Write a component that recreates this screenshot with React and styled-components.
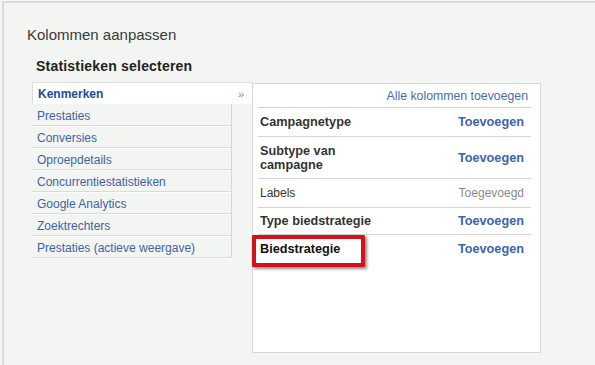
import React from 'react';
import styled, { createGlobalStyle } from 'styled-components';

const GlobalStyle = createGlobalStyle`
  html, body {
    margin: 0;
    padding: 0;
    background: #f2f5f1;
    font-family: Arial, "Liberation Sans", sans-serif;
  }
`;

const Frame = styled.div`
  box-sizing: border-box;
  min-height: calc(100vh - 1px);
  margin: 1px 0 0 2px;
  padding: 23px 0 0 23px;
  border-top: 2px solid #d8dbd8;
  border-left: 2px solid #d8dbd8;
`;

const Title = styled.h1`
  margin: 0;
  font-size: 15px;
  line-height: 18px;
  font-weight: normal;
  color: #3a3a3a;
`;

const SubTitle = styled.h2`
  margin: 14px 0 0 9px;
  font-size: 14px;
  line-height: 16px;
  font-weight: bold;
  letter-spacing: 0.2px;
  color: #222;
`;

const Body = styled.div`
  display: flex;
  align-items: flex-start;
  margin: 8px 0 0 5px;
`;

const Menu = styled.div`
  width: 220px;
`;

const MenuItem = styled.div`
  box-sizing: border-box;
  height: 22px;
  display: flex;
  align-items: center;
  justify-content: space-between;
  font-size: 12px;
  ${(p) =>
    p.$active
      ? `
    width: 220px;
    padding: 1px 8px 0 5px;
    background: #fff;
    border-top: 1px solid #dcdedc;
    border-left: 1px solid #dcdedc;
    font-weight: bold;
    color: #26499c;
  `
      : `
    width: 200px;
    padding: 3px 5px 0;
    border-right: 1px solid #d6d8d6;
    border-bottom: 1px solid #d9dbd9;
    box-shadow: 0 1px 0 #fbfcfb;
    color: #3f62ab;
  `}
`;

const Chevron = styled.span`
  font-size: 11px;
  font-weight: normal;
  color: #8a8a8a;
`;

const Panel = styled.div`
  box-sizing: border-box;
  width: 289px;
  height: 270px;
  margin-top: 1px;
  padding: 0 9px 0 5px;
  background: #fff;
  border: 1px solid #d6d8d6;
`;

const PanelHeader = styled.div`
  box-sizing: border-box;
  height: 23px;
  padding: 5px 3px 0 0;
  display: flex;
  justify-content: flex-end;
  font-size: 12.3px;
  line-height: 15px;
  color: #4a6cb5;
`;

const Row = styled.div`
  position: relative;
  display: grid;
  grid-template-columns: 128px 1fr;
  align-items: center;
  padding: ${(p) => (p.$tight ? '6px 7px 5px 2px' : '7px 7px 6px 2px')};
  line-height: ${(p) => (p.$multi ? '14px' : '15px')};
  border-top: 1px solid #d3d5d3;
`;

const Name = styled.span`
  font-size: ${(p) => (p.$plain ? '12px' : '12.7px')};
  font-weight: ${(p) => (p.$plain ? 'normal' : 'bold')};
  color: ${(p) => (p.$dark ? '#111' : '#333')};
`;

const Action = styled.span`
  justify-self: end;
  font-size: ${(p) => (p.$done ? '12px' : '12.7px')};
  font-weight: ${(p) => (p.$done ? 'normal' : 'bold')};
  color: ${(p) => (p.$done ? '#8a8a8a' : '#3d63b1')};
`;

const Highlight = styled.div`
  position: absolute;
  left: -6px;
  top: 0;
  width: 113px;
  height: 32px;
  box-sizing: border-box;
  border: 4px solid #d3121c;
  border-radius: 1px;
  box-shadow: 2px 2px 3px rgba(0, 0, 0, 0.45);
  pointer-events: none;
`;

const menu = [
  'Kenmerken',
  'Prestaties',
  'Conversies',
  'Oproepdetails',
  'Concurrentiestatistieken',
  'Google Analytics',
  'Zoektrechters',
  'Prestaties (actieve weergave)',
];

const columns = [
  { name: 'Campagnetype' },
  { name: <>Subtype van<br />campagne</>, multi: true },
  { name: 'Labels', done: true },
  { name: 'Type biedstrategie', tight: true },
  { name: 'Biedstrategie', marked: true },
];

export default function App() {
  return (
    <>
      <GlobalStyle />
      <Frame>
        <Title>Kolommen aanpassen</Title>
        <SubTitle>Statistieken selecteren</SubTitle>
        <Body>
          <Menu>
            {menu.map((label, i) => (
              <MenuItem key={label} $active={i === 0}>
                {label}
                {i === 0 && <Chevron>»</Chevron>}
              </MenuItem>
            ))}
          </Menu>
          <Panel>
            <PanelHeader>Alle kolommen toevoegen</PanelHeader>
            {columns.map((c, i) => (
              <Row key={i} $multi={c.multi} $tight={c.tight}>
                <Name $plain={c.done} $dark={c.marked}>{c.name}</Name>
                <Action $done={c.done}>{c.done ? 'Toegevoegd' : 'Toevoegen'}</Action>
                {c.marked && <Highlight />}
              </Row>
            ))}
          </Panel>
        </Body>
      </Frame>
    </>
  );
}
